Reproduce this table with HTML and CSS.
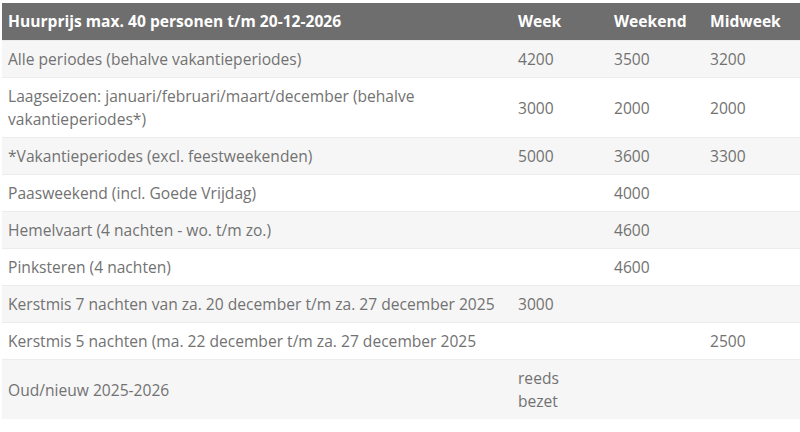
FILE: index.html
```html
<!DOCTYPE html>
<html lang="nl">
<head>
<meta charset="utf-8">
<link rel="stylesheet" href="styles.css">
</head>
<body>
<table class="prices">
  <thead>
    <tr>
      <th class="c-name">Huurprijs max. 40 personen t/m 20-12-2026</th>
      <th class="c-val">Week</th>
      <th class="c-val">Weekend</th>
      <th class="c-val">Midweek</th>
    </tr>
  </thead>
  <tbody>
    <tr><td>Alle periodes (behalve vakantieperiodes)</td><td>4200</td><td>3500</td><td>3200</td></tr>
    <tr><td>Laagseizoen: januari/februari/maart/december (behalve vakantieperiodes*)</td><td>3000</td><td>2000</td><td>2000</td></tr>
    <tr><td>*Vakantieperiodes (excl. feestweekenden)</td><td>5000</td><td>3600</td><td>3300</td></tr>
    <tr><td>Paasweekend (incl. Goede Vrijdag)</td><td></td><td>4000</td><td></td></tr>
    <tr><td>Hemelvaart (4 nachten - wo. t/m zo.)</td><td></td><td>4600</td><td></td></tr>
    <tr><td>Pinksteren (4 nachten)</td><td></td><td>4600</td><td></td></tr>
    <tr><td>Kerstmis 7 nachten van za. 20 december t/m za. 27 december 2025</td><td>3000</td><td></td><td></td></tr>
    <tr><td>Kerstmis 5 nachten (ma. 22 december t/m za. 27 december 2025</td><td></td><td></td><td>2500</td></tr>
    <tr><td>Oud/nieuw 2025-2026</td><td>reeds<br>bezet</td><td></td><td></td></tr>
  </tbody>
</table>
</body>
</html>
```
FILE: styles.css
```css
html, body {
  margin: 0;
  padding: 0;
  background: #ffffff;
}
body {
  padding: 3px 0 0 2px;
  font-family: "Open Sans", "Liberation Sans", sans-serif;
}
.prices {
  border-collapse: collapse;
  width: 798px;
  table-layout: fixed;
  font-size: 15.6px;
  color: #727272;
}
.prices th {
  background: #6e6e6e;
  color: #ffffff;
  font-weight: 700;
  text-align: left;
  padding: 7px 6px;
  line-height: 23px;
}
.prices .c-name { width: 498px; }
.prices .c-val { width: 84px; }
.prices td {
  padding: 7px 6px 6px;
  line-height: 23px;
  vertical-align: middle;
  border-top: 1px solid #ececec;
}
.prices tbody tr:nth-child(odd) td { background: #f6f6f6; }
.prices tbody tr:nth-child(even) td { background: #ffffff; }
```
